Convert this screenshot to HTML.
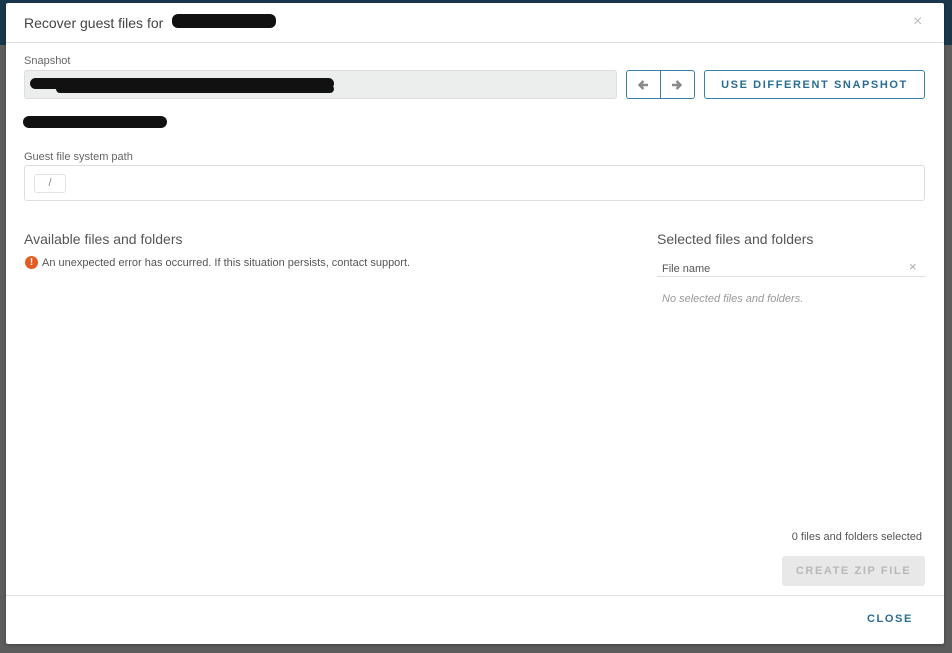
<!DOCTYPE html>
<html><head><meta charset="utf-8"><style>
*{box-sizing:border-box;margin:0;padding:0}
body{width:952px;height:653px;overflow:hidden;font-family:"Liberation Sans",sans-serif;background:#5c5c5c;position:relative;color:#333}
.top{position:absolute;left:0;top:0;width:952px;height:45px;background:#1a374b}
.modal{position:absolute;left:6px;top:3px;width:938px;height:641px;background:#fff;border-radius:2px;box-shadow:0 1px 3px rgba(0,0,0,.3)}
.abs{position:absolute}
.hdr{left:0;top:0;width:938px;height:40px;border-bottom:1px solid #ddd}
.title{left:18px;top:12px;font-size:14px;color:#444}
.redact{background:#111;border-radius:6px}
.lbl{font-size:11px;color:#666}
.btn{border:1px solid #3a7fa8;border-radius:3px;color:#2a6d92;font-size:11px;font-weight:bold;letter-spacing:1.6px;text-align:center}
.h2{font-size:14px;color:#555}
</style></head><body>
<div class="top"></div>
<div class="modal">
 <div class="abs hdr"></div>
 <div class="abs title">Recover guest files for</div>
 <div class="abs redact" style="left:166px;top:11px;width:104px;height:14px"></div>
 <div class="abs" style="left:907px;top:10px;font-size:16px;color:#bbb">×</div>

 <div class="abs lbl" style="left:18px;top:52px">Snapshot</div>
 <div class="abs" style="left:18px;top:67px;width:593px;height:29px;background:#eceeee;border:1px solid #ddd;border-radius:3px"></div>
 <div class="abs redact" style="left:24px;top:75px;width:304px;height:11px"></div>
 <div class="abs redact" style="left:50px;top:82px;width:278px;height:8px"></div>
 <div class="abs" style="left:620px;top:67px;width:69px;height:29px;border:1px solid #3a7fa8;border-radius:3px"></div>
 <div class="abs" style="left:654px;top:67px;width:1px;height:29px;background:#3a7fa8"></div>
 <svg class="abs" style="left:631px;top:76px" width="12" height="12" viewBox="0 0 12 12"><path d="M11 6H3M6.5 2L2.5 6l4 4" stroke="#888" stroke-width="2.4" fill="none"/></svg>
 <svg class="abs" style="left:665px;top:76px" width="12" height="12" viewBox="0 0 12 12"><path d="M1 6h8M5.5 2l4 4-4 4" stroke="#888" stroke-width="2.4" fill="none"/></svg>
 <div class="abs btn" style="left:698px;top:67px;width:221px;height:29px;line-height:28px">USE DIFFERENT SNAPSHOT</div>
 <div class="abs redact" style="left:17px;top:113px;width:144px;height:12px"></div>

 <div class="abs lbl" style="left:18px;top:148px">Guest file system path</div>
 <div class="abs" style="left:18px;top:162px;width:901px;height:36px;border:1px solid #ddd;border-radius:3px"></div>
 <div class="abs" style="left:28px;top:171px;width:32px;height:19px;border:1px solid #e3e3e3;border-radius:3px;font-size:11px;color:#888;text-align:center;line-height:17px">/</div>

 <div class="abs h2" style="left:18px;top:228px">Available files and folders</div>
 <div class="abs" style="left:19px;top:253px;width:13px;height:13px;border-radius:50%;background:#e35c21;color:#fff;font-size:10px;font-weight:bold;text-align:center;line-height:13px">!</div>
 <div class="abs" style="left:36px;top:254px;font-size:11px;color:#555">An unexpected error has occurred. If this situation persists, contact support.</div>

 <div class="abs h2" style="left:651px;top:228px">Selected files and folders</div>
 <div class="abs" style="left:656px;top:260px;font-size:11px;color:#555">File name</div>
 <div class="abs" style="left:903px;top:256px;font-size:13px;color:#aaa">×</div>
 <div class="abs" style="left:651px;top:273px;width:268px;height:1px;background:#ddd"></div>
 <div class="abs" style="left:656px;top:290px;font-size:11px;color:#999;font-style:italic">No selected files and folders.</div>

 <div class="abs" style="left:700px;top:528px;width:216px;text-align:right;font-size:11px;color:#555">0 files and folders selected</div>
 <div class="abs" style="left:776px;top:553px;width:143px;height:30px;background:#e8e8e8;border-radius:3px;color:#b8b8b8;font-size:11px;font-weight:bold;letter-spacing:1.6px;text-align:center;line-height:31px">CREATE ZIP FILE</div>

 <div class="abs" style="left:0;top:592px;width:938px;height:1px;background:#ddd"></div>
 <div class="abs" style="left:861px;top:610px;font-size:11px;font-weight:bold;letter-spacing:1.6px;color:#2a6d92">CLOSE</div>
</div>
</body></html>
